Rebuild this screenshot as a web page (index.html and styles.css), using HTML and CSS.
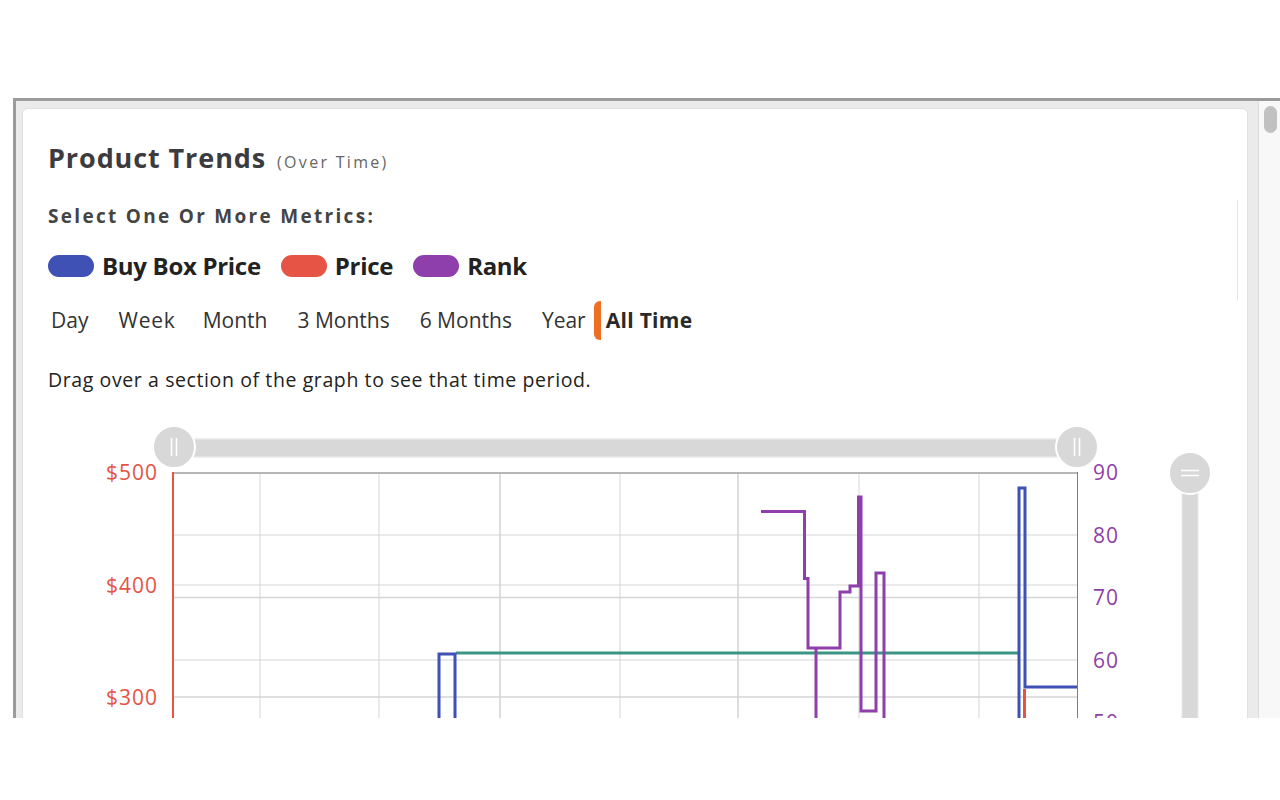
FILE: index.html
```html
<!DOCTYPE html>
<html lang="en">
<head>
<meta charset="utf-8">
<title>Product Trends</title>
<link rel="stylesheet" href="styles.css">
</head>
<body>
<div class="page">
  <div class="frame">
    <div class="main">
      <div class="card">
        <div class="title-row">
          <h1 class="title">Product Trends</h1>
          <span class="subtitle">(Over Time)</span>
        </div>
        <div class="metrics">
          <div class="metrics-label">Select One Or More Metrics:</div>
          <div class="legend">
            <div class="legend-item"><span class="pill pill-blue"></span><span class="legend-text">Buy Box Price</span></div>
            <div class="legend-item"><span class="pill pill-red"></span><span class="legend-text">Price</span></div>
            <div class="legend-item"><span class="pill pill-purple"></span><span class="legend-text">Rank</span></div>
          </div>
        </div>
        <div class="tabs">
          <span class="tab">Day</span>
          <span class="tab">Week</span>
          <span class="tab">Month</span>
          <span class="tab">3 Months</span>
          <span class="tab">6 Months</span>
          <span class="tab">Year</span>
          <span class="tab tab-active"><span class="tab-mark"></span>All Time</span>
        </div>
        <p class="hint">Drag over a section of the graph to see that time period.</p>
        <svg class="chart" width="1190" height="310" viewBox="48 420 1190 310" xmlns="http://www.w3.org/2000/svg">
          <!-- horizontal range slider -->
          <rect x="190" y="439" width="870" height="18" fill="#d8d8d8" stroke="#e8e8e8" stroke-width="1.5"/>
          <!-- grid -->
          <g stroke="#d5d5d5" stroke-width="1">
            <line x1="174" y1="535" x2="1077" y2="535"/>
            <line x1="174" y1="585" x2="1077" y2="585"/>
            <line x1="174" y1="597.5" x2="1077" y2="597.5" stroke-width="1.6"/>
            <line x1="174" y1="660" x2="1077" y2="660"/>
            <line x1="174" y1="697" x2="1077" y2="697" stroke-width="1.6"/>
            <line x1="260" y1="472" x2="260" y2="730"/>
            <line x1="379" y1="472" x2="379" y2="730"/>
            <line x1="500" y1="472" x2="500" y2="730" stroke-width="1.6"/>
            <line x1="620" y1="472" x2="620" y2="730"/>
            <line x1="738" y1="472" x2="738" y2="730" stroke-width="1.6"/>
            <line x1="859" y1="472" x2="859" y2="730"/>
            <line x1="979" y1="472" x2="979" y2="730"/>
          </g>
          <line x1="174" y1="473" x2="1077" y2="473" stroke="#b6b6b6" stroke-width="2"/>
          <line x1="173" y1="472" x2="173" y2="730" stroke="#e55444" stroke-width="2"/>
          <line x1="1077.5" y1="472" x2="1077.5" y2="730" stroke="#a35cc0" stroke-width="1"/>
          <!-- series -->
          <g fill="none" stroke-width="3" stroke-linejoin="miter">
            <path d="M456 653 H1018" stroke="#3b9484"/>
            <path d="M439 730 V654 H455 V730" stroke="#3f51b5"/>
            <path d="M1024.5 689 V730" stroke="#e55444"/>
            <path d="M1019 730 V488 H1025 V687 H1077" stroke="#3f51b5"/>
            <path d="M761 511.5 H804.5 V578.5 H808 V648 H840 V592 H850 V586 H858.5 V497 H861 V711 H876 V573 H884 V730" stroke="#8e3fab"/>
            <path d="M816 648 V730" stroke="#8e3fab"/>
          </g>
          <!-- handles -->
          <circle cx="174" cy="447" r="21" fill="#d8d8d8" stroke="#ffffff" stroke-width="2"/>
          <g stroke="#ffffff" stroke-width="1.6">
            <line x1="171.5" y1="438" x2="171.5" y2="456"/>
            <line x1="176.5" y1="438" x2="176.5" y2="456"/>
          </g>
          <circle cx="1077" cy="447" r="21" fill="#d8d8d8" stroke="#ffffff" stroke-width="2"/>
          <g stroke="#ffffff" stroke-width="1.6">
            <line x1="1074.5" y1="438" x2="1074.5" y2="456"/>
            <line x1="1079.5" y1="438" x2="1079.5" y2="456"/>
          </g>
          <!-- vertical slider -->
          <rect x="1182" y="488" width="16" height="250" fill="#d8d8d8" stroke="#e8e8e8" stroke-width="1"/>
          <circle cx="1190" cy="473" r="21" fill="#d8d8d8" stroke="#ffffff" stroke-width="2"/>
          <g stroke="#ffffff" stroke-width="1.6">
            <line x1="1181" y1="470.5" x2="1199" y2="470.5"/>
            <line x1="1181" y1="475.5" x2="1199" y2="475.5"/>
          </g>
          <!-- axis labels -->
          <g class="axis-left" text-anchor="end">
            <text x="158" y="480">$500</text>
            <text x="158" y="593">$400</text>
            <text x="158" y="705">$300</text>
          </g>
          <g class="axis-right">
            <text x="1093" y="480">90</text>
            <text x="1093" y="543">80</text>
            <text x="1093" y="605">70</text>
            <text x="1093" y="668">60</text>
            <text x="1093" y="730">50</text>
          </g>
        </svg>
      </div>
    </div>
    <div class="scrollbar"><div class="thumb"></div></div>
  </div>
</div>
</body>
</html>
```

FILE: styles.css
```css
html, body {
  margin: 0;
  background: #ffffff;
  font-family: "Open Sans", "Lato", sans-serif;
}

.page {
  padding-top: 98px;
  padding-left: 13px;
}

.frame {
  display: flex;
  height: 617px;
  border-top: 3px solid #9b9b9b;
  border-left: 3px solid #9b9b9b;
  background: #ebebeb;
  overflow: hidden;
}

.main {
  flex: 1;
  min-width: 0;
  padding: 7px 10px 0 6px;
}

.card {
  background: #ffffff;
  border: 1px solid #e0e0e0;
  border-radius: 6px;
  height: 700px;
  padding: 31px 9px 0 25px;
}

.title-row {
  display: flex;
  align-items: baseline;
  gap: 11px;
  height: 36px;
}

.title {
  margin: 0;
  font-size: 27px;
  line-height: 36px;
  font-weight: 700;
  letter-spacing: 0.9px;
  color: #3b3b40;
}

.subtitle {
  font-size: 16px;
  letter-spacing: 2.3px;
  color: #666666;
}

.metrics {
  margin-top: 24px;
  padding: 4px 0 23px;
  border-right: 1px solid #e4e4e4;
}

.metrics-label {
  font-size: 19px;
  line-height: 24px;
  font-weight: 700;
  letter-spacing: 2.3px;
  color: #444444;
}

.legend {
  display: flex;
  align-items: center;
  gap: 20px;
  margin-top: 27px;
  height: 22px;
}

.legend-item {
  display: flex;
  align-items: center;
  gap: 8px;
}

.pill {
  display: block;
  width: 46px;
  height: 22px;
  border-radius: 11px;
}

.pill-blue { background: #3f51b5; }
.pill-red { background: #e55444; }
.pill-purple { background: #8e3fab; }

.legend-text {
  font-size: 24px;
  line-height: 22px;
  font-weight: 700;
  color: #222222;
  letter-spacing: -0.3px;
}

.tabs {
  display: flex;
  align-items: center;
  margin-top: 1px;
  height: 39px;
  padding-left: 3px;
}

.tab {
  font-size: 21px;
  line-height: 39px;
  color: #333333;
  margin-right: 30px;
}

.tab:nth-child(2) {
  letter-spacing: 0.8px;
  margin-right: 27px;
}

.tab:nth-child(3) {
  margin-right: 30px;
}

.tab:nth-child(6) {
  margin-right: 8px;
}

.tab-active {
  display: flex;
  align-items: center;
  font-weight: 700;
  color: #2a2a2a;
  letter-spacing: 0.3px;
}

.tab-mark {
  display: block;
  width: 7px;
  height: 39px;
  margin-right: 5px;
  border-radius: 6px 0 0 6px;
  background: #ec6f24;
}

.hint {
  margin: 28px 0 0;
  font-size: 19.5px;
  line-height: 24px;
  letter-spacing: 0.6px;
  color: #222222;
}

.chart {
  display: block;
  margin-top: 28px;
}

.axis-left text {
  font-family: "Open Sans", sans-serif;
  font-size: 21px;
  letter-spacing: 1px;
  fill: #e55444;
}

.axis-right text {
  font-family: "Open Sans", sans-serif;
  font-size: 21px;
  letter-spacing: 1px;
  fill: #8e3fab;
}

.scrollbar {
  width: 21px;
  flex: none;
  background: #f8f8f8;
  border-left: 1px solid #dcdcdc;
}

.thumb {
  width: 13px;
  height: 27px;
  margin: 5px 0 0 5px;
  border-radius: 7px;
  background: #c1c1c1;
}
```
